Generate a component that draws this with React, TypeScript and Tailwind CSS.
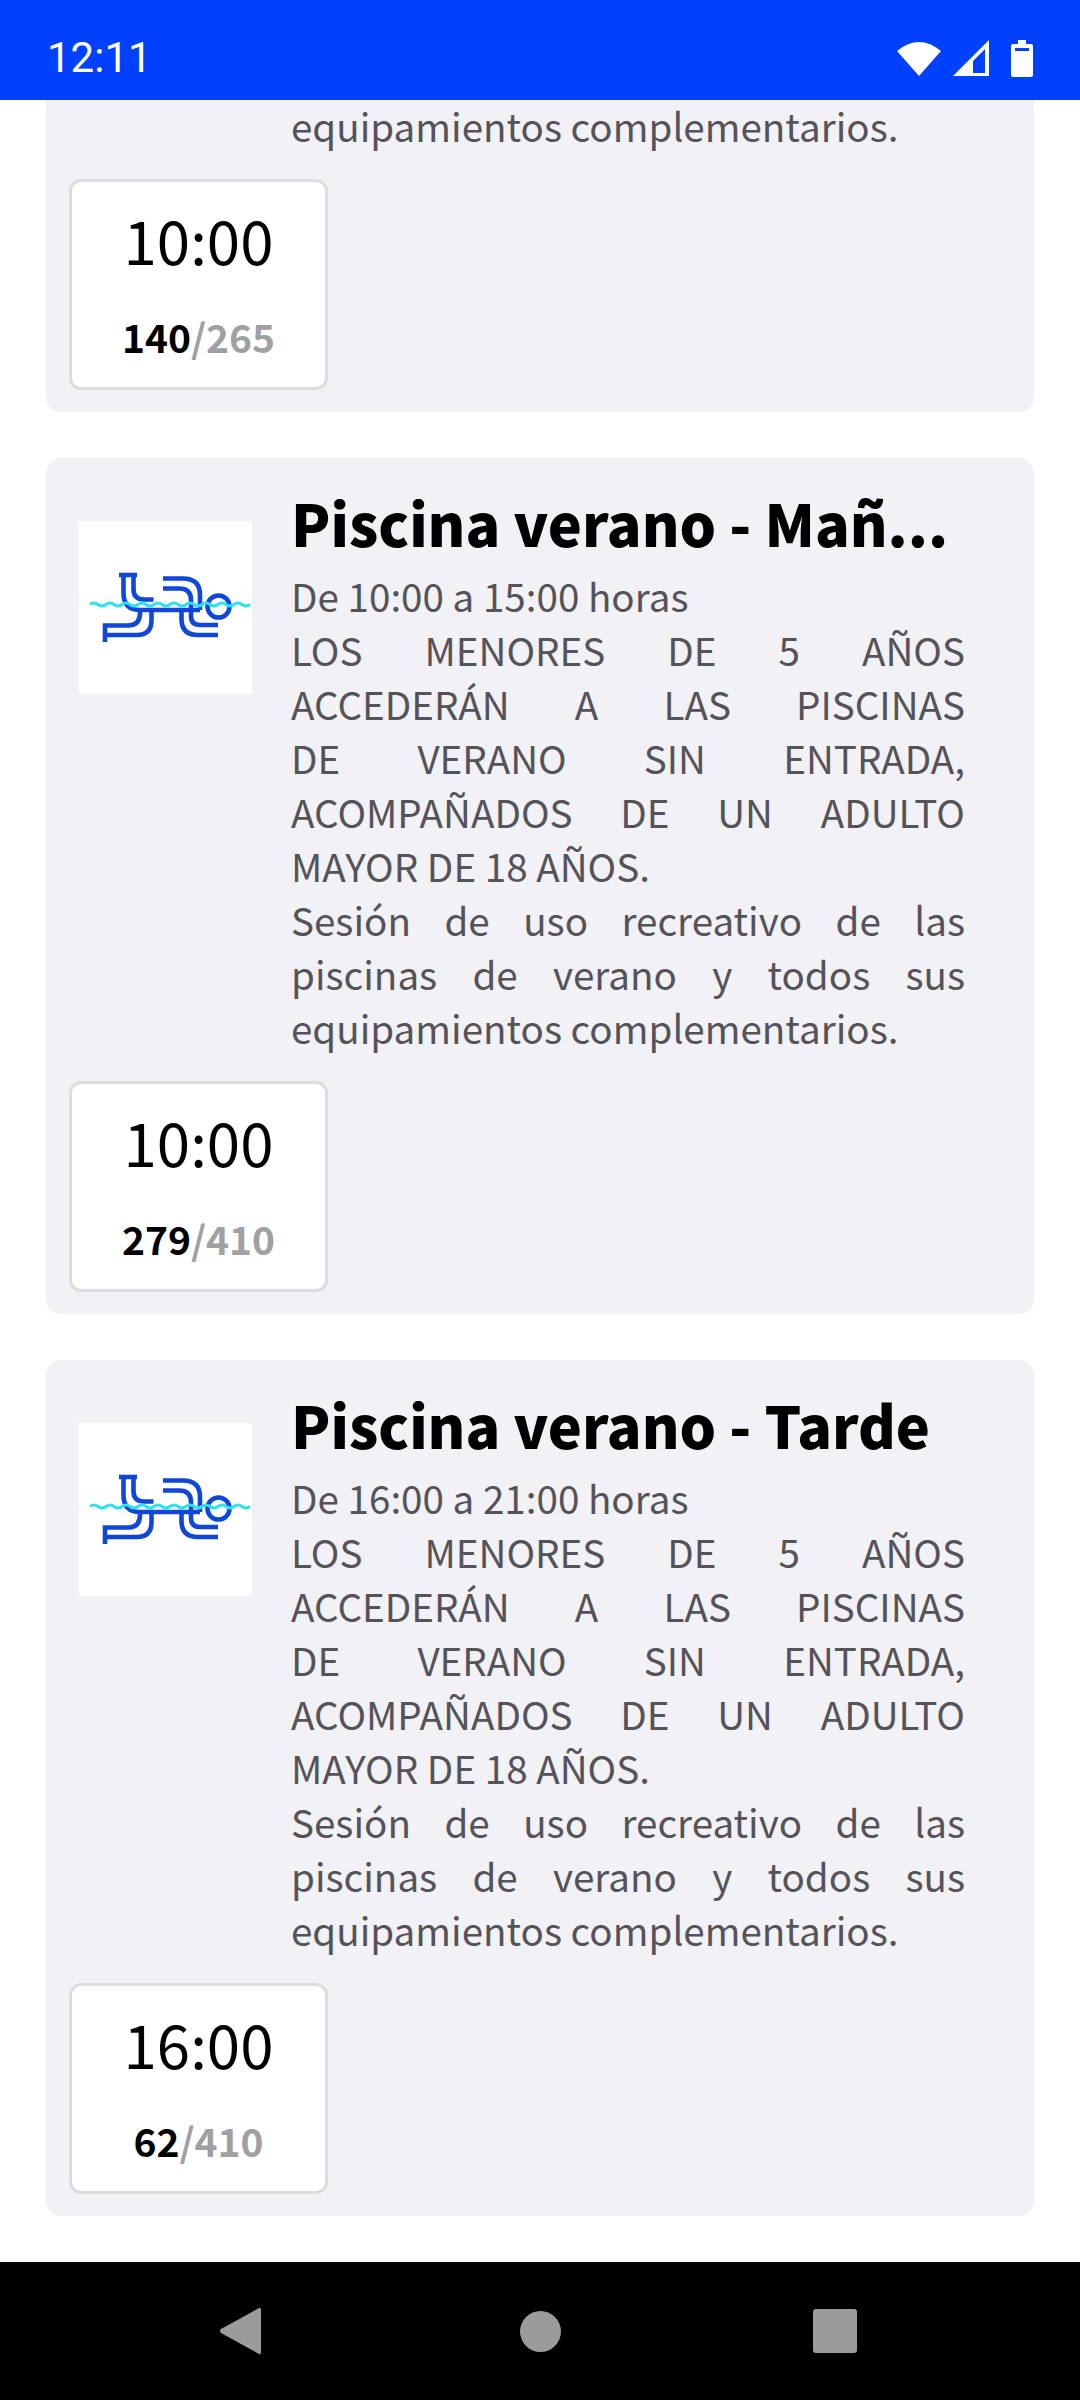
const bodyFont = "font-['Noto_Sans_CJK_SC','Noto_Sans',sans-serif]";

// line breaks as in the picture, every line stretched to the full column
const notice = ['LOS MENORES DE 5 AÑOS', 'ACCEDERÁN A LAS PISCINAS', 'DE VERANO SIN ENTRADA,', 'ACOMPAÑADOS DE UN ADULTO'];
const session =
  'Sesión de uso recreativo de las piscinas de verano y todos sus equipamientos complementarios.';

const sessions = [
  { title: 'Piscina verano - Mañ...', hours: 'De 10:00 a 15:00 horas', time: '10:00', used: 140, total: 265 },
  { title: 'Piscina verano - Mañ...', hours: 'De 10:00 a 15:00 horas', time: '10:00', used: 279, total: 410 },
  { title: 'Piscina verano - Tarde', hours: 'De 16:00 a 21:00 horas', time: '16:00', used: 62, total: 410 },
];

function PoolLogo() {
  return (
    <svg viewBox="0 0 173 173" className="h-full w-full">
      <g fill="none" stroke="#1047d8" strokeWidth="4.6">
        <path d="M40 54 H58" />
        <path d="M44.5 54 V72 Q44.5 89 61 89 H121" />
        <path d="M54.5 54 V68 Q54.5 78.5 65 78.5 H74.5" />
        <path d="M26 121 V104.5 H49 Q61 104.5 61 92 V89" />
        <path d="M26 114 H58 Q72.5 114 72.5 99 V89" />
        <path d="M84 67.5 H100 Q112 67.5 112 79 V89" />
        <path d="M84 57.5 H104 Q121 57.5 121 74 V89" />
        <path d="M102.5 89 V98 Q102.5 114 119 114 H139" />
        <path d="M112 89 V95 Q112 104 121 104 H139" />
        <circle cx="139.5" cy="85.5" r="11" />
      </g>
      <path
        d="M11 83.5 q4 -3 8 0 t8 0 t8 0 t8 0 t8 0 t8 0 t8 0 t8 0 t8 0 t8 0 t8 0 t8 0 t8 0 t8 0 t8 0 t8 0 t8 0 t8 0 t8 0 t8 0"
        fill="none"
        stroke="#2de2ee"
        strokeWidth="3"
      />
    </svg>
  );
}

function SessionCard({ title, hours, time, used, total }: (typeof sessions)[number]) {
  return (
    <section className="mx-[46px] shrink-0 rounded-[15px] bg-[#f2f1f5] pb-[22px] pl-[23px] pt-[19px]">
      <div className="flex">
        <div className="mt-[44px] ml-[10px] h-[173px] w-[173px] shrink-0 bg-white">
          <PoolLogo />
        </div>
        <div className="ml-[39px] w-[674px] text-[38.6px] leading-[54px] text-[#55535a]">
          <h2 className="whitespace-nowrap text-[57.5px] font-black leading-[91px] text-black">{title}</h2>
          <p>{hours}</p>
          {notice.map((line) => (
            <p key={line} className="[text-align-last:justify]">
              {line}
            </p>
          ))}
          <p>MAYOR DE 18 AÑOS.</p>
          <p className="text-justify">{session}</p>
        </div>
      </div>
      <div className="mt-[27px] flex h-[211px] w-[259px] flex-col items-center rounded-[12px] border-[3px] border-[#dddcdf] bg-white">
        <span className="mt-[21px] text-[60px] leading-[72px] text-black">{time}</span>
        <span className="mt-[34px] text-[39px] font-bold leading-[54px] text-[#a09fa3]">
          <span className="text-black">{used}</span>/{total}
        </span>
      </div>
    </section>
  );
}

export default function App() {
  return (
    <div className={`flex h-[2400px] w-[1080px] flex-col overflow-hidden bg-white ${bodyFont}`}>
      <header className="z-10 flex h-[100px] shrink-0 items-center justify-between bg-[#0040ff] pl-[47px] pr-[47px] pt-[16px] text-white">
        <span className="font-['Roboto',sans-serif] text-[42px] leading-none">12:11</span>
        <div className="flex items-center">
          <svg viewBox="0 0 44 36" className="h-[36px] w-[44px]" fill="#fff">
            <path d="M0 11 Q22 -7 44 11 L22 36 Z" />
          </svg>
          <svg viewBox="0 0 36 36" className="ml-[12px] h-[36px] w-[36px]" fill="#fff" fillRule="evenodd">
            <path d="M0 36 L36 0 V36 Z M20 33 H32 V9 L20 21 Z" />
          </svg>
          <svg viewBox="0 0 22 37" className="ml-[22px] h-[37px] w-[22px]" fill="#fff" fillRule="evenodd">
            <path d="M7 0 H15 V4 H20 Q22 4 22 6 V35 Q22 37 20 37 H2 Q0 37 0 35 V6 Q0 4 2 4 H7 Z M4 8 V11 H18 V8 Z" />
          </svg>
        </div>
      </header>

      <main className="flex min-h-0 flex-1 flex-col justify-end gap-[46px] pb-[46px]">
        {sessions.map((s, i) => (
          <SessionCard key={i} {...s} />
        ))}
      </main>

      <nav className="flex h-[138px] shrink-0 items-center bg-black">
        <div className="flex w-full items-center pl-[219px]">
          <svg viewBox="0 0 42 48" className="h-[48px] w-[42px]" fill="#9b9a9c">
            <path d="M40 1 Q42 0 42 3 V45 Q42 48 40 47 L2 26 Q0 24 2 22 Z" />
          </svg>
          <div className="ml-[259px] h-[41px] w-[41px] rounded-full bg-[#9b9a9c]" />
          <div className="ml-[252px] h-[44px] w-[44px] rounded-[3px] bg-[#9b9a9c]" />
        </div>
      </nav>
    </div>
  );
}
